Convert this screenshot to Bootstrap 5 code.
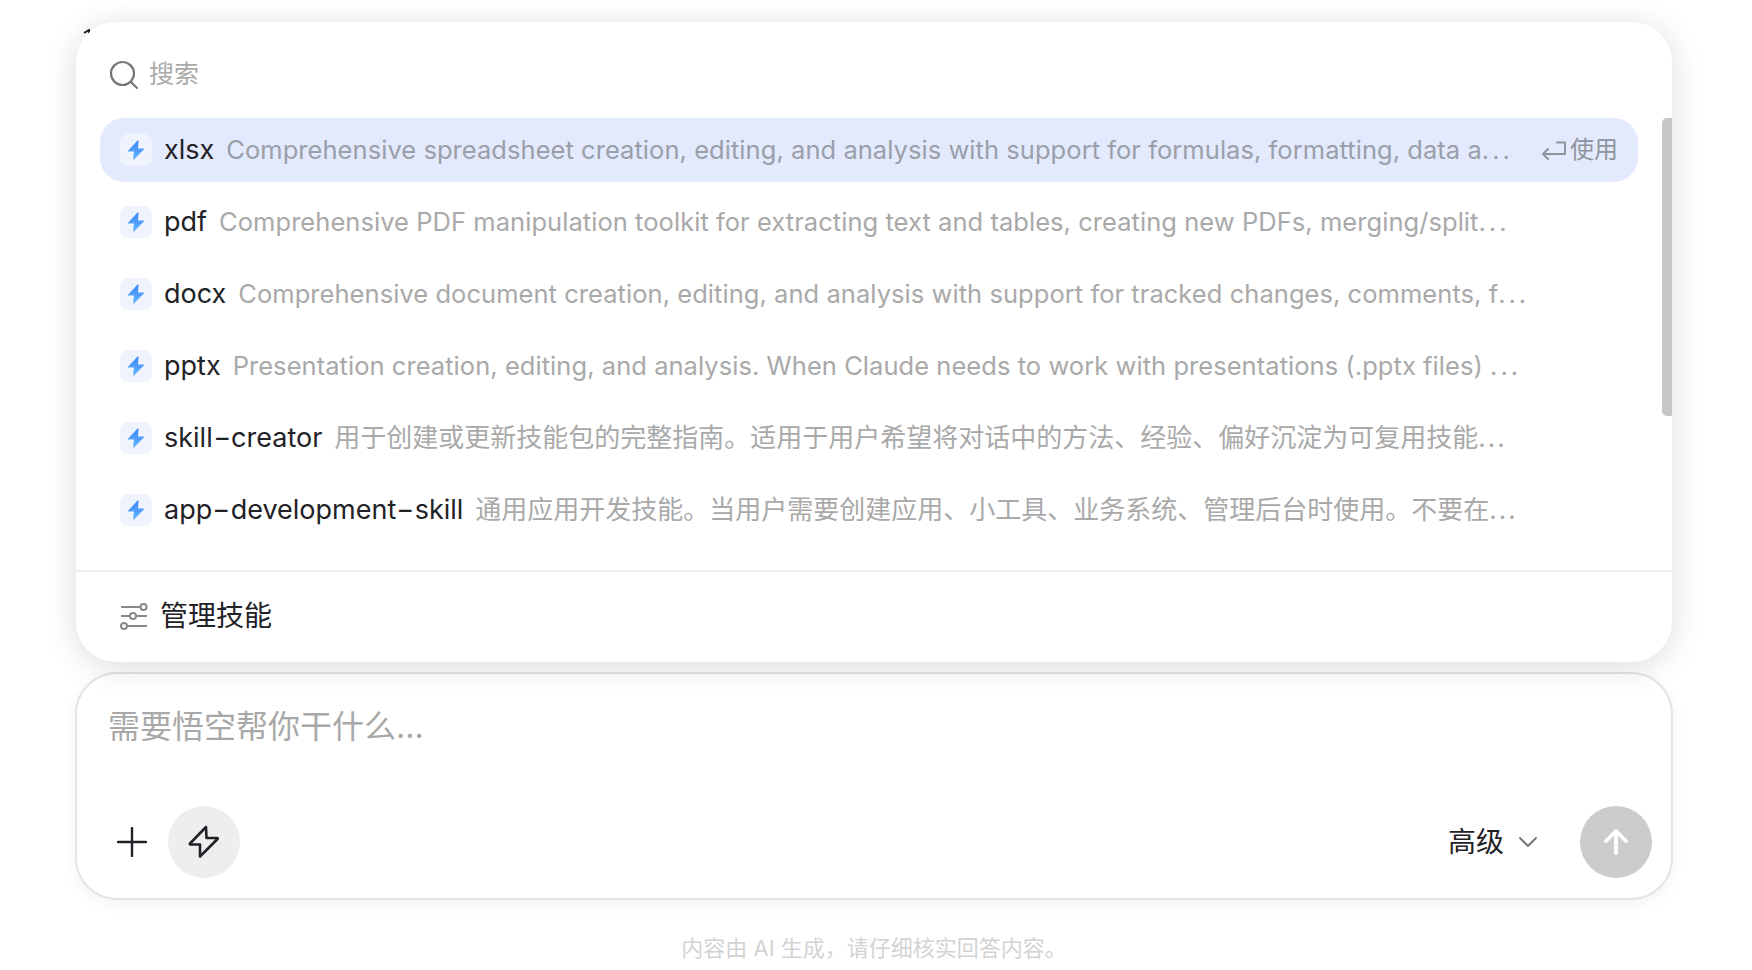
<!DOCTYPE html>
<html lang="zh">
<head>
<meta charset="utf-8">
<title>悟空</title>
<link rel="stylesheet" href="https://cdn.jsdelivr.net/npm/bootstrap@5.3.0/dist/css/bootstrap.min.css">
<style>
html,body{height:970px;overflow:hidden;background:#fff}
body{font-family:Inter,"Noto Sans CJK SC",sans-serif;color:#1f2226;padding:22px 80px 0 76px;position:relative}
.stray{position:absolute;left:83px;top:29px;width:10px;height:10px}
.popup{height:640px;border-radius:40px;background:#fff;box-shadow:0 4px 32px rgba(0,0,0,.14);position:relative;overflow:hidden;z-index:1}
.search-row{height:96px;padding:10px 0 0 33px;gap:10px;color:#aaa;font-size:25px}
.skill-list{height:452px;padding:0 34px 0 24px}
.skill-row{height:64px;margin-bottom:8px;padding:0 20px;border-radius:24px;gap:12px}
.skill-row.on{background:#e4eafd}
.skill-tile{width:32px;height:32px;border-radius:8px;background:#eff3fe;flex:none}
.skill-name{font-size:27px;line-height:36px;flex:none;color:#1f2226}
.dash{display:inline-block;transform:scaleX(1.45);margin:0 3px}
.skill-desc{font-size:25.5px;line-height:36px;letter-spacing:.05px;color:#a9a9a9;min-width:0;flex:1;white-space:nowrap}
.skill-desc.cn{font-size:26px;letter-spacing:0}
.dots{letter-spacing:3px}
.cn .dots{letter-spacing:2px}
.on .skill-desc{color:#9a9fa9}
.use-slot{width:77px;flex:none;margin-left:3px;font-size:24px;color:#8f939c;gap:2px}
.rail{position:absolute;right:0;top:96px;width:10px;height:298px;border-radius:5px 0 0 5px;background:#c6c8c8}
.manage-row{height:92px;border-top:2px solid #ececec;padding:0 0 2px 44px;font-size:28px;gap:12px}
.composer{margin:10px -1px 0 -1px;height:228px;border:2px solid #e4e4e4;border-radius:42px;background:#fff;box-shadow:0 4px 16px rgba(0,0,0,.05);padding:0 19px 20px 19px}
.ask{font-size:32px;line-height:40px;color:#a8a8a8;padding:33px 12px 0;flex:1}
.round-btn{width:72px;height:72px;border-radius:50%;flex:none;border:0;padding:0}
.plus-btn{width:72px;height:72px;flex:none}
.bolt-btn{background:#eee}
.send-btn{background:#ccc}
.level{font-size:28px;gap:14px;margin-right:42px}
.note{text-align:center;font-size:22px;color:#d3d3d3;margin-top:34px;line-height:28px}
</style>
</head>
<body>
<svg class="stray" viewBox="0 0 10 10"><path d="M1 4 6 1 6 8" fill="none" stroke="#222" stroke-width="2"/></svg>
<div class="popup">
  <div class="search-row d-flex align-items-center">
    <svg width="30" height="30" viewBox="0 0 30 30" fill="none" stroke="#777" stroke-width="2.2" stroke-linecap="round"><circle cx="13.5" cy="13.5" r="11.5"/><path d="M22 22l6 6"/></svg>
    <span>搜索</span>
  </div>
  <div class="skill-list">
    <div class="skill-row on d-flex align-items-center">
      <div class="skill-tile d-flex align-items-center justify-content-center"><svg width="18" height="20" viewBox="0 0 18 20"><defs><linearGradient id="g" x1="0" y1="0" x2="0" y2="1"><stop offset="0" stop-color="#3c84fa"/><stop offset="1" stop-color="#63b5ff"/></linearGradient></defs><path d="M10.6 0.6 1.2 10.6c-.4.5-.2 1 .5 1H7L6.2 19.2c0 .5.4.6.8.2l9.8-10c.4-.5.2-1-.5-1H11L11.6 1c.1-.6-.5-.8-1-.4z" fill="url(#g)"/></svg></div>
      <span class="skill-name">xlsx</span>
      <div class="skill-desc">Comprehensive spreadsheet creation, editing, and analysis with support for formulas, formatting, data a<span class="dots">...</span></div>
      <div class="use-slot d-flex align-items-center justify-content-end"><svg width="27" height="20" viewBox="0 0 27 20" fill="none" stroke="#8f939c" stroke-width="2" stroke-linecap="round" stroke-linejoin="round"><path d="M24 2.500V14H2M7 9l-5 5 5 5M16 2.500h8"/></svg><span>使用</span></div>
    </div>
    <div class="skill-row d-flex align-items-center">
      <div class="skill-tile d-flex align-items-center justify-content-center"><svg width="18" height="20" viewBox="0 0 18 20"><path d="M10.6 0.6 1.2 10.6c-.4.5-.2 1 .5 1H7L6.2 19.2c0 .5.4.6.8.2l9.8-10c.4-.5.2-1-.5-1H11L11.6 1c.1-.6-.5-.8-1-.4z" fill="url(#g)"/></svg></div>
      <span class="skill-name">pdf</span>
      <div class="skill-desc">Comprehensive PDF manipulation toolkit for extracting text and tables, creating new PDFs, merging/split<span class="dots">...</span></div>
      <div class="use-slot"></div>
    </div>
    <div class="skill-row d-flex align-items-center">
      <div class="skill-tile d-flex align-items-center justify-content-center"><svg width="18" height="20" viewBox="0 0 18 20"><path d="M10.6 0.6 1.2 10.6c-.4.5-.2 1 .5 1H7L6.2 19.2c0 .5.4.6.8.2l9.8-10c.4-.5.2-1-.5-1H11L11.6 1c.1-.6-.5-.8-1-.4z" fill="url(#g)"/></svg></div>
      <span class="skill-name">docx</span>
      <div class="skill-desc">Comprehensive document creation, editing, and analysis with support for tracked changes, comments, f<span class="dots">...</span></div>
      <div class="use-slot"></div>
    </div>
    <div class="skill-row d-flex align-items-center">
      <div class="skill-tile d-flex align-items-center justify-content-center"><svg width="18" height="20" viewBox="0 0 18 20"><path d="M10.6 0.6 1.2 10.6c-.4.5-.2 1 .5 1H7L6.2 19.2c0 .5.4.6.8.2l9.8-10c.4-.5.2-1-.5-1H11L11.6 1c.1-.6-.5-.8-1-.4z" fill="url(#g)"/></svg></div>
      <span class="skill-name">pptx</span>
      <div class="skill-desc">Presentation creation, editing, and analysis. When Claude needs to work with presentations (.pptx files) <span class="dots">...</span></div>
      <div class="use-slot"></div>
    </div>
    <div class="skill-row d-flex align-items-center">
      <div class="skill-tile d-flex align-items-center justify-content-center"><svg width="18" height="20" viewBox="0 0 18 20"><path d="M10.6 0.6 1.2 10.6c-.4.5-.2 1 .5 1H7L6.2 19.2c0 .5.4.6.8.2l9.8-10c.4-.5.2-1-.5-1H11L11.6 1c.1-.6-.5-.8-1-.4z" fill="url(#g)"/></svg></div>
      <span class="skill-name">skill<span class="dash">-</span>creator</span>
      <div class="skill-desc cn">用于创建或更新技能包的完整指南。适用于用户希望将对话中的方法、经验、偏好沉淀为可复用技能<span class="dots">...</span></div>
      <div class="use-slot"></div>
    </div>
    <div class="skill-row d-flex align-items-center">
      <div class="skill-tile d-flex align-items-center justify-content-center"><svg width="18" height="20" viewBox="0 0 18 20"><path d="M10.6 0.6 1.2 10.6c-.4.5-.2 1 .5 1H7L6.2 19.2c0 .5.4.6.8.2l9.8-10c.4-.5.2-1-.5-1H11L11.6 1c.1-.6-.5-.8-1-.4z" fill="url(#g)"/></svg></div>
      <span class="skill-name">app<span class="dash">-</span>development<span class="dash">-</span>skill</span>
      <div class="skill-desc cn">通用应用开发技能。当用户需要创建应用、小工具、业务系统、管理后台时使用。不要在<span class="dots">...</span></div>
      <div class="use-slot"></div>
    </div>
  </div>
  <div class="rail"></div>
  <div class="manage-row d-flex align-items-center">
    <svg width="28" height="30" viewBox="0 0 28 30" fill="none" stroke="#888" stroke-width="2"><path d="M1 6h19M1 15h8M17 15h10M8 25h19"/><circle cx="23.500" cy="6" r="3"/><circle cx="13" cy="15" r="3"/><circle cx="4" cy="25" r="3"/></svg>
    <span>管理技能</span>
  </div>
</div>
<div class="composer d-flex flex-column">
  <div class="ask">需要悟空帮你干什么...</div>
  <div class="d-flex align-items-center">
    <div class="plus-btn d-flex align-items-center justify-content-center"><svg width="30" height="30" viewBox="0 0 30 30" stroke="#1f2226" stroke-width="2.400" stroke-linecap="round"><path d="M15 1v28M1 15h28"/></svg></div>
    <button class="round-btn bolt-btn d-flex align-items-center justify-content-center" type="button" aria-label="技能"><svg width="32" height="34" viewBox="0 0 32 34" fill="none" stroke="#1f2226" stroke-width="2.600" stroke-linejoin="round" stroke-linecap="round"><path d="M18 2 2 18.500c-.5.6-.3 1 .5 1H12L12 31.500 29.500 14c.5-.6.300-1-.5-1H18.500Z"/></svg></button>
    <div class="flex-grow-1"></div>
    <div class="level d-flex align-items-center"><span>高级</span><svg width="20" height="12" viewBox="0 0 20 12" fill="none" stroke="#777" stroke-width="2" stroke-linecap="round" stroke-linejoin="round"><path d="M2 2l8 8 8-8"/></svg></div>
    <button class="round-btn send-btn d-flex align-items-center justify-content-center" type="button" aria-label="发送"><svg width="28" height="28" viewBox="0 0 28 28" fill="none" stroke="#fff" stroke-width="3.800" stroke-linecap="round" stroke-linejoin="round"><path d="M14 25V4M4 13 14 3l10 10"/></svg></button>
  </div>
</div>
<div class="note">内容由 AI 生成，请仔细核实回答内容。</div>
</body>
</html>
